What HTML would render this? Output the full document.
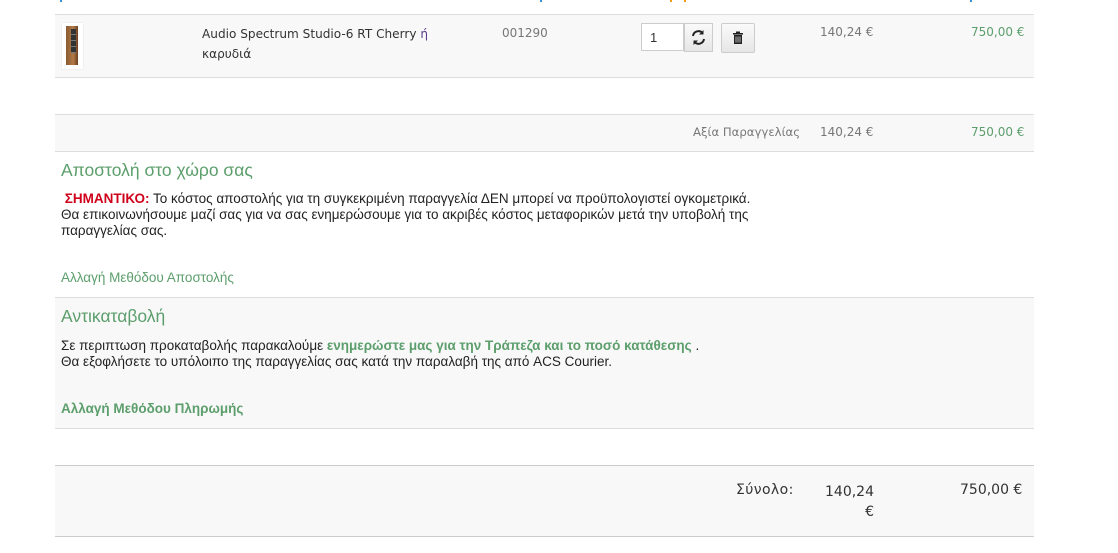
<!DOCTYPE html>
<html><head><meta charset="utf-8"><style>
body{margin:0;width:1118px;height:553px;background:#fff;position:relative;overflow:hidden;font-family:"DejaVu Sans",Verdana,sans-serif;font-size:12px;color:#333}
.a{position:absolute}
.band{position:absolute;left:55px;width:979px;background:#f8f8f8}
.ln{position:absolute;left:55px;width:979px;height:1px;background:#ddd}
.g{color:#5c9e6c}
.gr{color:#777}
.p{font-family:"Liberation Sans",Arial,sans-serif;font-size:13.5px;color:#222;line-height:16px}
h3{margin:0;font-family:"Liberation Sans",Arial,sans-serif;font-weight:normal;font-size:17.5px;color:#5c9e6c}
</style></head><body>
<div class="a" style="left:60px;top:0;width:2px;height:2px;background:#3a8fd6"></div>
<div class="a" style="left:540px;top:0;width:2px;height:2px;background:#3a8fd6"></div>
<div class="a" style="left:670px;top:0;width:130px;height:2px;background:linear-gradient(90deg,#f39c12 0 2px,transparent 2px 14px,#f39c12 14px 16px,transparent 16px)"></div>
<div class="a" style="left:970px;top:0;width:2px;height:2px;background:#3a8fd6"></div>

<div class="band" style="top:14px;height:63px"></div>
<div class="band" style="top:114px;height:37px"></div>
<div class="band" style="top:297px;height:131px"></div>
<div class="band" style="top:465px;height:71px"></div>
<div class="ln" style="top:14px"></div>
<div class="ln" style="top:77px"></div>
<div class="ln" style="top:114px"></div>
<div class="ln" style="top:151px"></div>
<div class="ln" style="top:297px"></div>
<div class="ln" style="top:428px"></div>
<div class="ln" style="top:465px;background:#ccc"></div>
<div class="ln" style="top:536px;background:#ccc"></div>

<div class="a" style="left:62px;top:23px;width:21px;height:46px;background:#fff;box-shadow:0 0 1px #ccc"><div style="margin:3px 0 0 4px;width:12px;height:39px;background:linear-gradient(90deg,#8a5a30,#b27a48 60%,#6b4020);position:relative"><div style="position:absolute;left:5px;top:3px;width:5px;height:24px;background:repeating-linear-gradient(#333 0 5px,#777 5px 6px)"></div></div></div>
<div class="a" style="left:202px;top:24px;line-height:20px;color:#333;font-size:12.1px">Audio Spectrum Studio-6 RT Cherry <span style="color:#5a3b8c">ή</span><br>καρυδιά</div>
<div class="a gr" style="left:502px;top:26px">001290</div>
<div class="a" style="left:641px;top:23px;width:43px;height:28px;border:1px solid #ccc;background:#fff;box-sizing:border-box;padding:6px 0 0 8px;font-family:'Liberation Sans',sans-serif;font-size:13px">1</div>
<div class="a" style="left:684px;top:23px;width:29px;height:29px;border:1px solid #ccc;background:linear-gradient(#fafafa,#e6e6e6);box-sizing:border-box"><svg width="27" height="27" viewBox="0 0 27 27"><path d="M8 12a5.5 5.5 0 0 1 9.5-3M19 15a5.5 5.5 0 0 1-9.5 3" fill="none" stroke="#222" stroke-width="2"/><path d="M18.5 6v4.5h-4.5zM8.5 21v-4.5h4.5z" fill="#222"/></svg></div>
<div class="a" style="left:721px;top:23px;width:34px;height:30px;border:1px solid #ccc;background:linear-gradient(#fafafa,#e6e6e6);box-sizing:border-box;border-radius:2px"><svg width="32" height="28" viewBox="0 0 32 28"><rect x="11" y="9" width="10" height="1.6" fill="#222"/><rect x="14" y="7.5" width="4" height="2" fill="#222"/><path d="M12 11h8v9h-8z" fill="#222"/><path d="M14 12.5v6M16 12.5v6M18 12.5v6" stroke="#ddd" stroke-width=".8"/></svg></div>
<div class="a gr" style="left:820px;top:25px">140,24 €</div>
<div class="a g" style="left:971px;top:25px">750,00 €</div>

<div class="a gr" style="left:693px;top:125px;font-size:11.7px">Αξία Παραγγελίας</div>
<div class="a gr" style="left:820px;top:125px">140,24 €</div>
<div class="a g" style="left:971px;top:125px">750,00 €</div>

<h3 class="a" style="left:61px;top:160px">Αποστολή στο χώρο σας</h3>
<div class="a p" style="left:61px;top:191px;width:800px"><b style="color:#d0021b">&nbsp;ΣΗΜΑΝΤΙΚΟ:</b> Το κόστος αποστολής για τη συγκεκριμένη παραγγελία ΔΕΝ μπορεί να προϋπολογιστεί ογκομετρικά.<br>Θα επικοινωνήσουμε μαζί σας για να σας ενημερώσουμε για το ακριβές κόστος μεταφορικών μετά την υποβολή της<br>παραγγελίας σας.</div>
<div class="a p g" style="left:61px;top:270px;color:#5c9e6c">Αλλαγή Μεθόδου Αποστολής</div>

<h3 class="a" style="left:61px;top:306px">Αντικαταβολή</h3>
<div class="a p" style="left:61px;top:338px;width:800px">Σε περιπτωση προκαταβολής παρακαλούμε <b class="g">ενημερώστε μας για την Τράπεζα και το ποσό κατάθεσης</b> .<br>Θα εξοφλήσετε το υπόλοιπο της παραγγελίας σας κατά την παραλαβή της από ACS Courier.</div>
<div class="a p" style="left:61px;top:401px"><b class="g">Αλλαγή Μεθόδου Πληρωμής</b></div>

<div class="a" style="left:736px;top:482px;font-size:14px;color:#333;letter-spacing:.4px">Σύνολο:</div>
<div class="a" style="left:814px;top:482px;font-size:14px;color:#333;line-height:20px;text-align:right;width:60px">140,24<br>€</div>
<div class="a" style="left:960px;top:482px;font-size:14px;color:#333">750,00 €</div>
</body></html>
